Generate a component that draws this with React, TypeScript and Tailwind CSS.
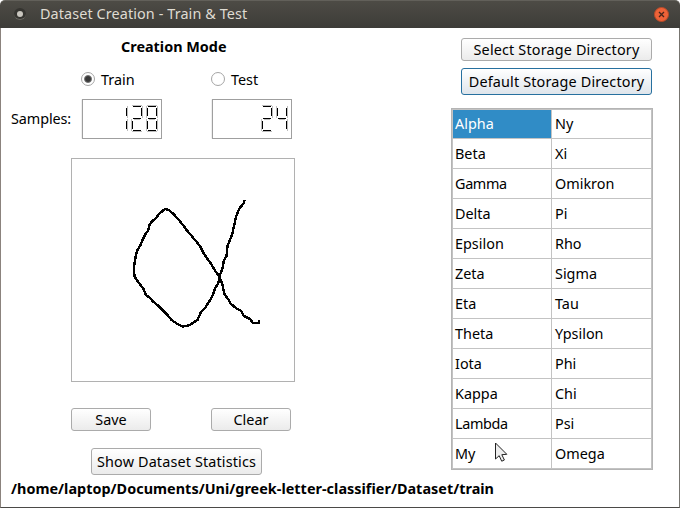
import { useState } from "react";

const LETTERS: [string, string][] = [
  ["Alpha", "Ny"],
  ["Beta", "Xi"],
  ["Gamma", "Omikron"],
  ["Delta", "Pi"],
  ["Epsilon", "Rho"],
  ["Zeta", "Sigma"],
  ["Eta", "Tau"],
  ["Theta", "Ypsilon"],
  ["Iota", "Phi"],
  ["Kappa", "Chi"],
  ["Lambda", "Psi"],
  ["My", "Omega"],
];

type Line = [number, number, number, number];

// Seven-segment ends on a 12 x 28 cell: the lit line, then its softer outer edge.
const SEGMENTS: Record<string, [Line, Line]> = {
  a: [[2, 2.5, 10, 2.5], [1, 1.5, 11, 1.5]],
  b: [[10.5, 4, 10.5, 12], [11.5, 2, 11.5, 14]],
  c: [[10.5, 17, 10.5, 25], [11.5, 15, 11.5, 27]],
  d: [[2, 26.5, 10, 26.5], [1, 27.5, 11, 27.5]],
  e: [[1.5, 17, 1.5, 25], [0.5, 15, 0.5, 27]],
  f: [[1.5, 4, 1.5, 12], [0.5, 2, 0.5, 14]],
  g: [[2, 14.5, 10, 14.5], [3, 15.5, 9, 15.5]],
};

const LIT: Record<string, string> = {
  "0": "abcdef",
  "1": "bc",
  "2": "abged",
  "3": "abgcd",
  "4": "fgbc",
  "5": "afgcd",
  "6": "afgedc",
  "7": "abc",
  "8": "abcdefg",
  "9": "abcdfg",
};

function Lcd({ value }: { value: number }) {
  return (
    <div
      role="img"
      aria-label={String(value)}
      className="flex h-[40px] w-[80px] justify-end gap-[3px] border border-[#9f9f9f] pt-[4px] pr-[3px] shadow-[-1px_0_0_-0.5px_#dcdcdc]"
    >
      {String(value)
        .split("")
        .map((digit, i) => (
          <svg key={i} width="12" height="28" shapeRendering="crispEdges">
            {LIT[digit].split("").map((s) => {
              const [lit, edge] = SEGMENTS[s];
              return (
                <g key={s}>
                  <line x1={edge[0]} y1={edge[1]} x2={edge[2]} y2={edge[3]} stroke="#bdbdbd" />
                  <line x1={lit[0]} y1={lit[1]} x2={lit[2]} y2={lit[3]} stroke="#000" />
                </g>
              );
            })}
          </svg>
        ))}
    </div>
  );
}

function Radio({ label, checked, onSelect }: { label: string; checked: boolean; onSelect: () => void }) {
  return (
    <button onClick={onSelect} className="flex h-[20px] w-[130px] items-center gap-[6px]">
      <span className="flex h-[14px] w-[14px] items-center justify-center rounded-full border border-[#a5a5a5] bg-white">
        {checked && <span className="h-[8px] w-[8px] rounded-full border border-[#777] bg-[#383838]" />}
      </span>
      <span className="pt-[2px]">{label}</span>
    </button>
  );
}

const BUTTON =
  "flex items-center justify-center whitespace-nowrap rounded-[3px] border border-[#ababab] bg-linear-to-b from-white to-[#ebebeb]";

const STROKE =
  "244.5,200 244,203 239,209 236,217 234.5,224 232.5,233 230,240 227.5,246 226.5,256 224,260 222.5,268 220,275 218,284 215,288 213,295 209.5,301 205,308 201,312 197.5,320 194,322 190,325 183,326.5 177.5,324 171.5,320 167.5,315 163.5,311 158.5,306 152.5,301 150,298 146,295 143.5,289 139,283 134.5,276.5 134,269 134.5,263 136,256 135,259 137,251 140.5,245 142.5,240 145.5,234 148,231 149.5,225 151.5,222 156,218 160,213 165,209 169,210 173.5,214 178,219 183,225 186.5,230 190,234 195,240 200,246 203.5,253 207.5,259 210,262 214,269 219.5,277 222,283 224.5,294 228,299 231,304 236,308 241,311 244,316 250,319 253,323 259,323 259,320";

export default function App() {
  const [mode, setMode] = useState("Train");
  return (
    <div className="relative flex h-[508px] w-[680px] flex-col overflow-hidden bg-white font-['Noto_Sans',sans-serif] text-[14.4px] leading-[20px] text-black">
      <header className="flex h-[28px] shrink-0 items-center rounded-t-[5px] border-t border-[#62605a] bg-linear-to-b from-[#4d4b45] to-[#3d3c38] pr-[11px] pb-px pl-[14px] text-[#dfdbd2]">
        <span className="flex h-[12px] w-[12px] items-center justify-center rounded-full border-b border-[#6a6963] bg-[#353430]">
          <span className="h-[6px] w-[6px] rounded-full bg-[#c9c6bf]" />
        </span>
        <h1 className="ml-[14px] flex-1 text-[14.4px] tracking-[0.1px]">Dataset Creation - Train &amp; Test</h1>
        <button aria-label="Close" className="flex h-[15px] w-[15px] items-center justify-center rounded-full border border-[#b84a28] bg-[#ee6238]">
          <svg width="7" height="7" viewBox="0 0 7 7" stroke="#49251a" strokeWidth="1.3">
            <path d="M1 1l5 5M6 1L1 6" />
          </svg>
        </button>
      </header>

      <main className="flex flex-1 justify-between border-r border-b border-l border-r-[#777570] border-b-[#4b4a47] border-l-[#8b837d]">
        <section className="flex w-[440px] flex-col pl-[10px]">
          <h2 className="mt-[9px] ml-[110px] h-[20px] font-bold">Creation Mode</h2>
          <div className="mt-[12px] ml-[70px] flex">
            {["Train", "Test"].map((m) => (
              <Radio key={m} label={m} checked={mode === m} onSelect={() => setMode(m)} />
            ))}
          </div>
          <div className="mt-[10px] flex">
            <span className="w-[71px] pt-[10px] tracking-[-0.1px]">Samples:</span>
            <Lcd value={128} />
            <span className="w-[50px]" />
            <Lcd value={24} />
          </div>
          <div className="mt-[19px] ml-[60px] h-[224px] w-[224px] border border-[#b1b1b1]">
            <svg width="222" height="222" viewBox="72 159 222 222" shapeRendering="crispEdges">
              <polyline points={STROKE} fill="none" stroke="#000" strokeWidth="2.4" />
            </svg>
          </div>
          <div className="mt-[26px] ml-[60px] flex gap-[60px]">
            <button className={`${BUTTON} h-[23px] w-[80px]`}>Save</button>
            <button className={`${BUTTON} h-[23px] w-[80px]`}>Clear</button>
          </div>
          <button className={`${BUTTON} mt-[17px] ml-[80px] h-[27px] w-[171px] tracking-[0.14px]`}>Show Dataset Statistics</button>
          <p className="mt-[4px] font-bold tracking-[0.03px] whitespace-nowrap">/home/laptop/Documents/Uni/greek-letter-classifier/Dataset/train</p>
        </section>

        <aside className="flex w-[228px] flex-col pt-[10px]">
          <button className={`${BUTTON} ml-[10px] h-[23px] w-[191px] tracking-[0.16px]`}>Select Storage Directory</button>
          <button className="mt-[7px] ml-[10px] flex h-[27px] w-[191px] items-center justify-center rounded-[3px] border border-[#27709f] bg-linear-to-b from-white to-[#dfe5eb] tracking-[0.16px] whitespace-nowrap">
            Default Storage Directory
          </button>
          <div className="mt-[13px] grid w-[202px] grid-cols-[99px_101px] grid-rows-[29px_repeat(10,30px)_31px] border border-[#b4b4b4]">
            {LETTERS.flat().map((name, i) => (
              <div
                key={name}
                className={`flex items-center border-t border-l border-[#c3c3c3] pl-[2px] ${i % 2 ? "border-r pl-[3px]" : ""} ${i >= 22 ? "border-b" : ""} ${i === 0 ? "bg-[#308cc6] text-white" : ""} ${/mm|mb/.test(name) ? "tracking-[-0.35px]" : ""}`}
              >
                {name}
              </div>
            ))}
          </div>
        </aside>
      </main>

      <svg className="absolute top-[442px] left-[494px]" width="14" height="21" viewBox="0 0 14 21">
        <path d="M1.5 1v16l3.7-3.3 2.5 5.5 2.7-1.2-2.6-5.3 5-.4z" fill="#eee" stroke="#222" />
      </svg>
    </div>
  );
}
